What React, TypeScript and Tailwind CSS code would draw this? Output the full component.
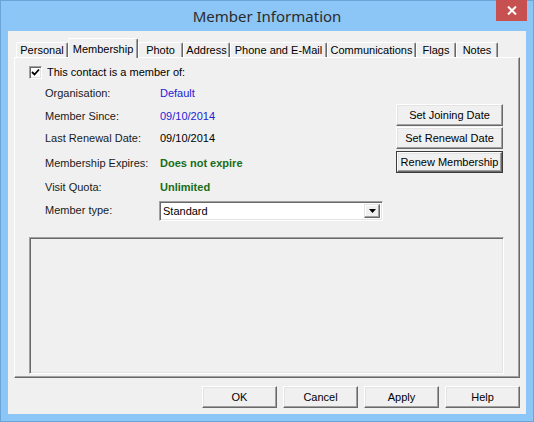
import React from "react";

const font = { fontFamily: '"Liberation Sans", Arial, sans-serif' };

function Btn({ label, w, def }: { label: string; w: string; def?: boolean }) {
  const inner = (
    <div className="flex h-full w-full items-center justify-center border-t border-l border-t-white border-l-white border-r border-b border-r-[#696969] border-b-[#696969] bg-[#f0f0f0] shadow-[inset_-1px_-1px_0_#a0a0a0,inset_1px_1px_0_#e3e3e3] text-[11px] text-black">
      {label}
    </div>
  );
  if (def) {
    return <div className={`${w} h-[22px] border border-[#3c3c3c]`}>{inner}</div>;
  }
  return <div className={`${w} h-[22px]`}>{inner}</div>;
}

const tabs: { label: string; w: string; sel?: boolean }[] = [
  { label: "Personal", w: "w-[52px]" },
  { label: "Membership", w: "w-[70px]", sel: true },
  { label: "Photo", w: "w-[45px]" },
  { label: "Address", w: "w-[47px]" },
  { label: "Phone and E-Mail", w: "w-[97px]" },
  { label: "Communications", w: "w-[89px]" },
  { label: "Flags", w: "w-[40px]" },
  { label: "Notes", w: "w-[42px]" },
];

export default function App() {
  return (
    <div
      className="flex h-[422px] w-[534px] flex-col border border-[#6aa4d8] bg-[#8cc6f6]"
      style={font}
    >
      {/* Title bar */}
      <div className="relative flex h-[30px] shrink-0 items-center justify-center">
        <span
          className="text-[15px] text-[#2b2b2b]"
          style={{ fontFamily: '"Noto Sans", "Open Sans", sans-serif' }}
        >
          Member Information
        </span>
        <div className="absolute right-[6px] top-[-1px] flex h-[21px] w-[31px] items-center justify-center bg-[#c75050]">
          <svg width="10" height="9" viewBox="0 0 10 9">
            <path d="M1 0.5 L9 8.5 M9 0.5 L1 8.5" stroke="white" strokeWidth="2" />
          </svg>
        </div>
      </div>

      {/* Client area */}
      <div className="mx-[7px] mb-[7px] flex flex-1 flex-col bg-[#f0f0f0] px-[6px] pb-[6px] pt-[7px]">
        {/* Tabs */}
        <div className="relative z-10 ml-[2px] flex items-start">
          {tabs.map((t) =>
            t.sel ? (
              <div
                key={t.label}
                className={`${t.w} flex h-[20px] items-start justify-center rounded-t-[2px] border-t border-l border-t-white border-l-white border-r border-r-[#696969] bg-[#f0f0f0] pt-[2px] text-[11px] text-black shadow-[inset_-1px_0_0_#a0a0a0]`}
              >
                {t.label}
              </div>
            ) : (
              <div
                key={t.label}
                className={`${t.w} mt-[4px] flex h-[15px] items-start justify-center rounded-t-[2px] border-t border-l border-t-white border-l-white border-r border-r-[#696969] bg-[#f0f0f0] pt-[1px] text-[11px] leading-[13px] text-black shadow-[inset_-1px_0_0_#a0a0a0]`}
              >
                {t.label}
              </div>
            )
          )}
        </div>

        {/* Panel */}
        <div className="-mt-px flex flex-1 flex-col border-t border-l border-t-white border-l-white border-r border-b border-r-[#696969] border-b-[#696969] pl-[14px] pr-[15px] pt-[4px] pb-[3px] shadow-[inset_-1px_-1px_0_#a0a0a0]">
          <div className="flex">
            {/* Left column */}
            <div className="flex w-[354px] flex-col text-[11px]">
              <div className="flex h-[20px] items-center">
                <div className="flex h-[13px] w-[13px] items-center justify-center border border-t-[#a0a0a0] border-l-[#a0a0a0] border-b-white border-r-white bg-white shadow-[inset_1px_1px_0_#696969,inset_-1px_-1px_0_#e3e3e3]">
                  <svg width="9" height="9" viewBox="0 0 9 9">
                    <path d="M1 4 L3.5 6.5 L8 1.5" stroke="black" strokeWidth="1.8" fill="none" />
                  </svg>
                </div>
                <span className="ml-[5px] text-black">This contact is a member of:</span>
              </div>
              <div className="ml-[16px] grid grid-cols-[115px_1fr] grid-rows-[22px_24px_20px_30px_18px_29px] items-center text-[#1a1a1a]">
                <span>Organisation:</span>
                <span className="text-[#2323d6]">Default</span>
                <span>Member Since:</span>
                <span className="text-[#2323d6]">09/10/2014</span>
                <span>Last Renewal Date:</span>
                <span className="text-black">09/10/2014</span>
                <span>Membership Expires:</span>
                <span className="font-bold text-[#176d17]">Does not expire</span>
                <span>Visit Quota:</span>
                <span className="font-bold text-[#176d17]">Unlimited</span>
                <span>Member type:</span>
                <div className="-ml-px flex h-[20px] w-[224px] border border-t-[#a0a0a0] border-l-[#a0a0a0] border-b-white border-r-white bg-white shadow-[inset_1px_1px_0_#696969,inset_-1px_-1px_0_#e3e3e3] p-[2px]">
                  <span className="flex-1 pl-[1px] leading-[14px] text-black">Standard</span>
                  <div className="flex h-full w-[16px] items-center justify-center border-t border-l border-t-[#e3e3e3] border-l-[#e3e3e3] border-r border-b border-r-[#696969] border-b-[#696969] bg-[#f0f0f0] shadow-[inset_-1px_-1px_0_#a0a0a0,inset_1px_1px_0_white]">
                    <svg width="7" height="4" viewBox="0 0 7 4">
                      <path d="M0 0 H7 L3.5 4 Z" fill="black" />
                    </svg>
                  </div>
                </div>
              </div>
            </div>
            {/* Right column */}
            <div className="ml-[13px] mt-[42px] flex w-[107px] flex-col gap-[1px]">
              <Btn label="Set Joining Date" w="w-[107px]" />
              <Btn label="Set Renewal Date" w="w-[107px]" />
              <div className="mt-[1px]">
                <Btn label="Renew Membership" w="w-[107px]" def />
              </div>
            </div>
          </div>
          {/* Sunken box */}
          <div className="mt-[12px] flex-1 border border-t-[#a0a0a0] border-l-[#a0a0a0] border-b-white border-r-white shadow-[inset_1px_1px_0_#696969,inset_-1px_-1px_0_#e3e3e3]" />
        </div>

        {/* Bottom buttons */}
        <div className="mt-[8px] flex justify-end gap-[6px]">
          <Btn label="OK" w="w-[75px]" />
          <Btn label="Cancel" w="w-[75px]" />
          <Btn label="Apply" w="w-[75px]" />
          <Btn label="Help" w="w-[75px]" />
        </div>
      </div>
    </div>
  );
}
